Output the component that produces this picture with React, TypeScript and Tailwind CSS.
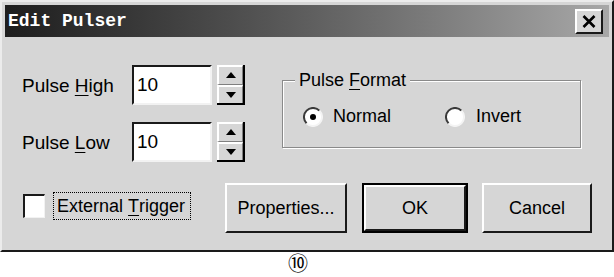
import React from "react";

const sans = { fontFamily: '"Liberation Sans", Arial, sans-serif' };

function Spinner() {
  return (
    <div className="flex flex-col w-[28px] h-[40px] border-r-2 border-b-2 border-r-black border-b-black">
      <div className="flex-1 flex items-center justify-center bg-[#d6d6d6] border-t-2 border-l-2 border-t-white border-l-white border-b border-b-[#808080] border-r border-r-[#808080]">
        <svg width="10" height="6" viewBox="0 0 10 6"><polygon points="5,0 10,6 0,6" fill="#000" /></svg>
      </div>
      <div className="flex-1 flex items-center justify-center bg-[#d6d6d6] border-t-2 border-l-2 border-t-white border-l-white border-r border-r-[#808080]">
        <svg width="10" height="6" viewBox="0 0 10 6"><polygon points="0,0 10,0 5,6" fill="#000" /></svg>
      </div>
    </div>
  );
}

function NumField({ ul, rest, pre }: { pre: string; ul: string; rest: string }) {
  return (
    <div className="flex items-center h-[40px]">
      <div className="w-[110px] text-[19px] leading-none text-black" style={sans}>
        {pre}
        <span className="underline underline-offset-[3px]">{ul}</span>
        {rest}
      </div>
      <div className="w-[80px] h-[40px] bg-white border-2 border-t-[#1a1a1a] border-l-[#1a1a1a] border-r-[#f2f2f2] border-b-[#f2f2f2] flex items-center pl-[3px] text-[19px] text-black" style={sans}>
        10
      </div>
      <div className="ml-[5px]">
        <Spinner />
      </div>
    </div>
  );
}

function Radio({ checked }: { checked?: boolean }) {
  return (
    <svg width="20" height="20" viewBox="0 0 20 20">
      <circle cx="10" cy="10" r="9" fill="#fff" />
      <path d="M3.6 16.4 A9 9 0 0 1 16.4 3.6" fill="none" stroke="#3a3a3a" strokeWidth="2" />
      <path d="M16.4 3.6 A9 9 0 0 1 3.6 16.4" fill="none" stroke="#f4f4f4" strokeWidth="2" />
      {checked && <circle cx="10" cy="10" r="3" fill="#000" />}
    </svg>
  );
}

function Button({ children, w, def }: { children: React.ReactNode; w: string; def?: boolean }) {
  return (
    <div className={`${w} h-[50px] ${def ? "border-2 border-black" : ""}`}>
      <div className="w-full h-full flex items-center justify-center bg-[#d6d6d6] border-2 border-t-white border-l-white border-r-[#1a1a1a] border-b-[#1a1a1a] text-[18px] text-black" style={sans}>
        {children}
      </div>
    </div>
  );
}

export default function App() {
  return (
    <div className="w-[614px] h-[277px] bg-white flex flex-col">
      <div className="w-[614px] h-[252px] shrink-0 bg-[#d6d6d6] border-2 border-t-[#ececec] border-l-[#ececec] border-r-[#1a1a1a] border-b-[#1a1a1a] p-[3px] flex flex-col">
        <div className="h-[32px] flex items-center bg-linear-to-r from-[#1e1e1e] via-[#5e5e5e] to-[#a8a8a8] pl-[3px] pr-[6px]">
          <span className="text-white font-bold text-[18px] leading-none" style={{ fontFamily: '"Liberation Mono", "Courier New", monospace' }}>
            Edit Pulser
          </span>
          <div className="ml-auto w-[28px] h-[25px] bg-[#d6d6d6] border-2 border-t-white border-l-white border-r-[#1a1a1a] border-b-[#1a1a1a] flex items-center justify-center">
            <svg width="14" height="13" viewBox="0 0 14 13">
              <path d="M1.5 1 L12.5 12 M12.5 1 L1.5 12" stroke="#000" strokeWidth="2.6" />
            </svg>
          </div>
        </div>

        <div className="flex-1 flex flex-col pl-[17px] pt-[28px]">
          <div className="flex">
            <div className="flex flex-col gap-[17px]">
              <NumField pre="Pulse " ul="H" rest="igh" />
              <NumField pre="Pulse " ul="L" rest="ow" />
            </div>
            <div className="relative ml-[37px] mt-[15px] w-[299px] h-[68px] border border-[#8a8a8a] shadow-[1px_1px_0_#fff,inset_1px_1px_0_#fff]">
              <div className="absolute -top-[12px] left-[12px] px-[4px] bg-[#d6d6d6] text-[18px] leading-[22px] text-black" style={sans}>
                Pulse <span className="underline underline-offset-[3px]">F</span>ormat
              </div>
              <div className="flex items-center pt-[22px] pl-[20px] text-[18px] text-black" style={sans}>
                <Radio checked />
                <span className="ml-[10px] w-[112px]">Normal</span>
                <Radio />
                <span className="ml-[11px]">Invert</span>
              </div>
            </div>
          </div>

          <div className="flex items-center mt-[21px]">
            <div className="ml-[1px] mt-[-4px] w-[22px] h-[24px] bg-white border-t-2 border-l-2 border-t-[#1a1a1a] border-l-[#1a1a1a] border-r border-b border-r-[#f2f2f2] border-b-[#f2f2f2]" />
            <div className="ml-[8px] mt-[-4px] w-[138px] h-[28px] border border-dotted border-black flex items-center pl-[3px] text-[18px] text-black" style={sans}>
              External&nbsp;<span className="underline underline-offset-[3px]">T</span>rigger
            </div>
            <div className="ml-[34px]">
              <Button w="w-[122px]">Properties...</Button>
            </div>
            <div className="ml-[15px]">
              <Button w="w-[106px]" def>OK</Button>
            </div>
            <div className="ml-[14px]">
              <Button w="w-[110px]">Cancel</Button>
            </div>
          </div>
        </div>
      </div>
      <div className="h-[25px] pl-[288px]">
        <span className="block -mt-[4px] text-[20px] leading-[29px] text-black" style={{ fontFamily: '"Noto Sans CJK SC", sans-serif' }}>⑩</span>
      </div>
    </div>
  );
}
